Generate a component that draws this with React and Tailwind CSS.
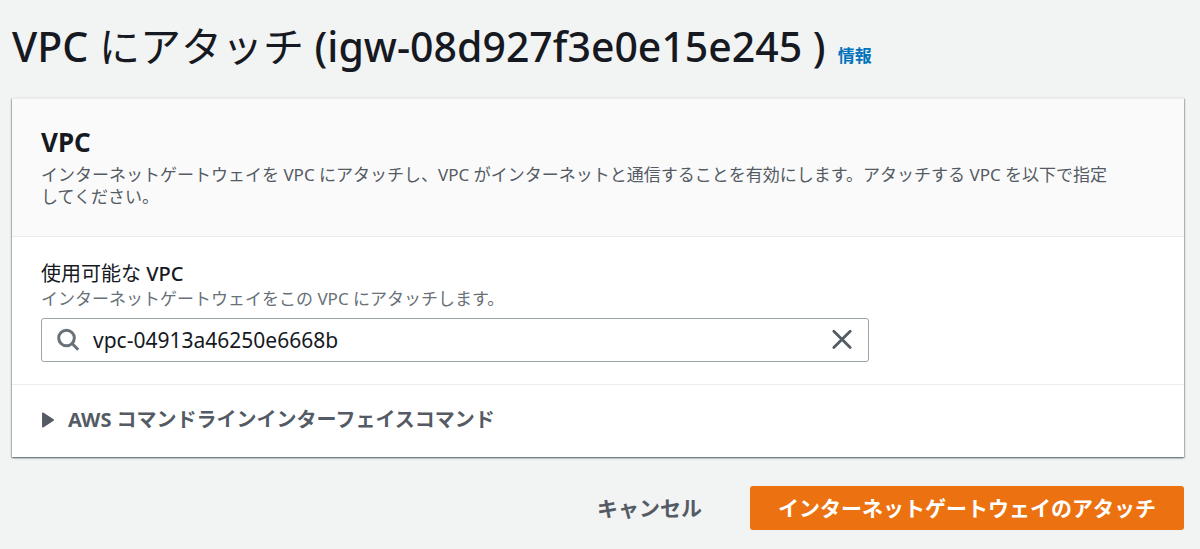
import { useState } from "react";

function SearchIcon() {
  return (
    <svg className="size-6 shrink-0" viewBox="0 0 24 24" fill="none" stroke="#687078" strokeWidth="3" aria-hidden="true">
      <circle cx="10.5" cy="10" r="7.8" />
      <path d="M15.8 15.3 L22.2 21.7" />
    </svg>
  );
}

function CloseIcon() {
  return (
    <svg className="size-6" viewBox="0 0 24 24" fill="none" stroke="#545b64" strokeWidth="2.8" strokeLinecap="round" aria-hidden="true">
      <path d="M3.8 3.2 L20.2 19.6 M20.2 3.2 L3.8 19.6" />
    </svg>
  );
}

function TriangleIcon() {
  return (
    <svg className="h-4 w-3 shrink-0" viewBox="0 0 12 16" fill="#545b64" stroke="#545b64" strokeWidth="1.5" strokeLinejoin="round" aria-hidden="true">
      <path d="M0.8 1.2 L11.2 8 L0.8 14.8 Z" />
    </svg>
  );
}

export default function App() {
  const [vpc, setVpc] = useState("vpc-04913a46250e6668b");

  return (
    <main
      lang="ja"
      className="min-h-screen bg-[#f2f3f3] pt-5 pr-4 pb-4 pl-3 font-['Noto_Sans','Noto_Sans_CJK_JP',sans-serif] text-[#16191f]"
    >
      <header className="mb-[26px] flex items-baseline gap-3">
        <h1 className="text-[41px] leading-[52px] font-medium">
          VPC <span className="font-normal">にアタッチ</span> (igw-08d927f3e0e15e245 )
        </h1>
        <a href="#info" className="text-[17px] leading-6 font-bold text-[#0073bb]">
          情報
        </a>
      </header>

      <section className="bg-white shadow-[0_1px_2px_0_rgba(0,28,36,0.5),1px_1px_1px_0_rgba(0,28,36,0.15),-1px_1px_1px_0_rgba(0,28,36,0.15)]">
        <div className="border-y border-[#eaeded] bg-[#fafafa] px-[29px] pt-[26px] pb-7">
          <h2 className="text-[26px] leading-[35px] font-bold">VPC</h2>
          <p className="pt-1 pr-10 text-[17px] leading-[22px] text-[#545b64]">
            インターネットゲートウェイを VPC にアタッチし、VPC がインターネットと通信することを有効にします。アタッチする VPC を以下で指定してください。
          </p>
        </div>

        <div className="grid grid-cols-4 gap-x-[29px] px-[29px] pt-[23px] pb-[22px]">
          <div className="col-span-3">
            <label htmlFor="vpc" className="block text-[20px] leading-7">
              使用可能な <span className="font-medium">VPC</span>
            </label>
            <p id="vpc-hint" className="mb-2 text-[17px] leading-[22px] text-[#687078]">
              インターネットゲートウェイをこの VPC にアタッチします。
            </p>
            <div className="flex h-11 items-center gap-[13px] rounded-[3px] border border-[#98a8a9] bg-white px-[14px]">
              <SearchIcon />
              <input
                id="vpc"
                type="text"
                aria-describedby="vpc-hint"
                value={vpc}
                onChange={(e) => setVpc(e.target.value)}
                className="min-w-0 flex-1 bg-transparent text-[21px] leading-7 outline-none"
              />
              <button type="button" aria-label="クリア" onClick={() => setVpc("")}>
                <CloseIcon />
              </button>
            </div>
          </div>
        </div>

        <details className="group border-t border-[#eaeded]">
          <summary className="flex cursor-pointer list-none items-center gap-[14px] px-[30px] pt-[21px] pb-[23px] text-[20px] leading-7 font-bold text-[#545b64]">
            <TriangleIcon />
            AWS コマンドラインインターフェイスコマンド
          </summary>
        </details>
      </section>

      <div className="mt-[29px] flex justify-end gap-5">
        <button type="button" className="h-11 px-7 text-[21px] leading-7 font-bold text-[#545b64]">
          キャンセル
        </button>
        <button type="button" className="h-11 rounded-[3px] bg-[#ec7211] px-7 text-[21px] leading-7 font-bold text-white">
          インターネットゲートウェイのアタッチ
        </button>
      </div>
    </main>
  );
}
